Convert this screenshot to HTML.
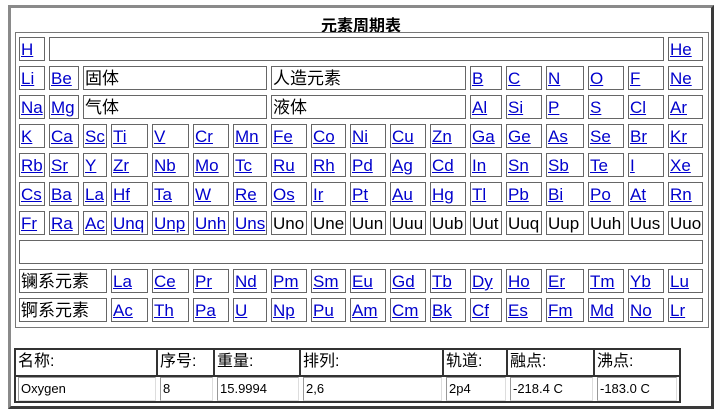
<!DOCTYPE html>
<html><head><meta charset="utf-8">
<style>
*{margin:0;padding:0;box-sizing:border-box}
body{width:722px;height:413px;background:#fff;position:relative;overflow:hidden;font-family:"Liberation Sans","Noto Sans CJK SC",sans-serif}
#outer{position:absolute;left:8px;top:5px;width:706px;height:404px;border:3px solid;border-color:#8a8a8a #3a3a3a #3a3a3a #8a8a8a}
#title{position:absolute;left:0;width:722px;top:12px;text-align:center;font-weight:bold;font-size:16px}
#main{position:absolute;left:15px;top:32px;width:694px;height:296px;border:1px solid #777}
.c{position:absolute;height:24px;border:1px solid #666;font-size:17px;line-height:24px;padding-left:1px;white-space:nowrap;overflow:hidden;color:#000}
.c a{color:#0000cc;text-decoration:underline}
#bt{position:absolute;left:14px;top:348px;width:667px;height:55px;border:2px solid #333}
.h{position:absolute;top:350px;height:25px;font-size:16px;line-height:24px;padding-left:2px;border-right:2px solid #333}
.d{position:absolute;top:377px;height:24px;font-size:13px;line-height:21px;padding-left:2px;border:1px solid #999;border-color:#999 #ddd #ddd #999;}
.sep{position:absolute;left:16px;top:375px;width:663px;height:2px;background:#333}
</style></head><body>
<div id="outer"></div>
<div id="title">元素周期表</div>
<div id="main"></div>
<div class="sep"></div>
<div class="h" style="left:16px;width:142px">名称:</div>
<div class="h" style="left:158px;width:57px">序号:</div>
<div class="h" style="left:215px;width:86px">重量:</div>
<div class="h" style="left:301px;width:143px">排列:</div>
<div class="h" style="left:444px;width:64px">轨道:</div>
<div class="h" style="left:508px;width:87px">融点:</div>
<div class="h" style="left:595px;width:84px;border-right:none">沸点:</div>
<div id="bt"></div>
<div class="d" style="left:18px;width:138px">Oxygen</div>
<div class="d" style="left:160px;width:53px">8</div>
<div class="d" style="left:217px;width:82px">15.9994</div>
<div class="d" style="left:303px;width:139px">2,6</div>
<div class="d" style="left:446px;width:60px">2p4</div>
<div class="d" style="left:510px;width:83px">-218.4 C</div>
<div class="d" style="left:597px;width:80px">-183.0 C</div>
<div id="g"></div>
<script>
var X=[19,49,83,111,152,193,233,271,311,350,390,430,470,506,546,588,628,668];
function w(i){return (i<17?X[i+1]-4:703)-X[i];}
var Y=[37,66,95,124,153,182,211,240,269,298];
var h='';
function cell(x,y,wd,t,link){h+='<div class="c" style="left:'+x+'px;top:'+y+'px;width:'+wd+'px">'+(link?'<a>'+t+'</a>':t)+'</div>';}
function span(a,b,y,t){cell(X[a],y,(b<17?X[b+1]-4:703)-X[a],t,false);}
cell(X[0],Y[0],w(0),'H',1);span(1,16,Y[0],'');cell(X[17],Y[0],w(17),'He',1);
cell(X[0],Y[1],w(0),'Li',1);cell(X[1],Y[1],w(1),'Be',1);span(2,6,Y[1],'固体');span(7,11,Y[1],'人造元素');
['B','C','N','O','F','Ne'].forEach(function(s,i){cell(X[12+i],Y[1],w(12+i),s,1)});
cell(X[0],Y[2],w(0),'Na',1);cell(X[1],Y[2],w(1),'Mg',1);span(2,6,Y[2],'气体');span(7,11,Y[2],'液体');
['Al','Si','P','S','Cl','Ar'].forEach(function(s,i){cell(X[12+i],Y[2],w(12+i),s,1)});
var rows=[
'K Ca Sc Ti V Cr Mn Fe Co Ni Cu Zn Ga Ge As Se Br Kr',
'Rb Sr Y Zr Nb Mo Tc Ru Rh Pd Ag Cd In Sn Sb Te I Xe',
'Cs Ba La Hf Ta W Re Os Ir Pt Au Hg Tl Pb Bi Po At Rn',
'Fr Ra Ac Unq Unp Unh Uns Uno Une Uun Uuu Uub Uut Uuq Uup Uuh Uus Uuo'];
rows.forEach(function(r,ri){r.split(' ').forEach(function(s,i){cell(X[i],Y[3+ri],w(i),s,!(ri==3&&i>=7))})});
span(0,17,Y[7],'');
span(0,2,Y[8],'镧系元素');span(0,2,Y[9],'锕系元素');
'La Ce Pr Nd Pm Sm Eu Gd Tb Dy Ho Er Tm Yb Lu'.split(' ').forEach(function(s,i){cell(X[3+i],Y[8],w(3+i),s,1)});
'Ac Th Pa U Np Pu Am Cm Bk Cf Es Fm Md No Lr'.split(' ').forEach(function(s,i){cell(X[3+i],Y[9],w(3+i),s,1)});
document.getElementById('g').innerHTML=h;
</script>
</body></html>
